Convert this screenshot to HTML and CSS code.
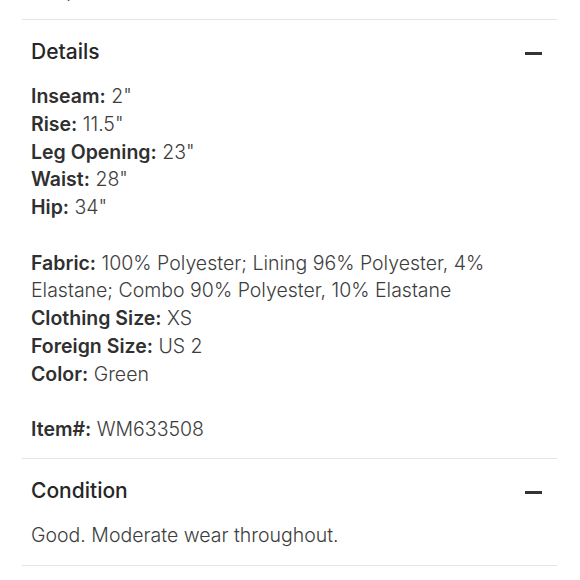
FILE: index.html
```html
<!DOCTYPE html>
<html>
<head>
<meta charset="utf-8">
<link rel="stylesheet" href="styles.css">
</head>
<body>
<div class="page">
  <section class="section section-top">
    <p class="text">Shop</p>
  </section>
  <section class="section">
    <div class="head">
      <h2 class="title">Details</h2>
      <span class="minus"></span>
    </div>
    <div class="body">
      <p class="text"><b>Inseam:</b> 2"</p>
      <p class="text"><b>Rise:</b> 11.5"</p>
      <p class="text"><b>Leg Opening:</b> 23"</p>
      <p class="text"><b>Waist:</b> 28"</p>
      <p class="text"><b>Hip:</b> 34"</p>
      <p class="text gap"><b>Fabric:</b> 100% Polyester; Lining 96% Polyester, 4% Elastane; Combo 90% Polyester, 10% Elastane</p>
      <p class="text"><b>Clothing Size:</b> XS</p>
      <p class="text"><b>Foreign Size:</b> US 2</p>
      <p class="text"><b>Color:</b> Green</p>
      <p class="text gap"><b>Item#:</b> WM633508</p>
    </div>
  </section>
  <section class="section">
    <div class="head">
      <h2 class="title">Condition</h2>
      <span class="minus"></span>
    </div>
    <div class="body">
      <p class="text">Good. Moderate wear throughout.</p>
    </div>
  </section>
</div>
</body>
</html>
```

FILE: styles.css
```css
* { box-sizing: border-box; }
html, body { margin: 0; padding: 0; background: #fff; }
body {
  font-family: Inter, "Liberation Sans", sans-serif;
  color: #444;
  overflow: hidden;
}
.page {
  width: 580px;
  padding: 0 23px 0 22px;
}
.section {
  border-bottom: 1px solid #e4e4e4;
  padding: 17.5px 0 14.5px 9px;
}
.section-top {
  margin-top: -23px;
  padding-top: 0;
  padding-bottom: 14.25px;
}
.head {
  display: flex;
  align-items: center;
  justify-content: space-between;
  height: 28px;
  margin-bottom: 17.5px;
  padding-right: 15px;
}
.title {
  margin: 0;
  font-size: 21px;
  line-height: 28px;
  font-weight: 500;
  color: #262626;
}
.minus {
  width: 17px;
  height: 3px;
  background: #333;
  margin-top: 3px;
}
.text {
  margin: 0;
  font-size: 19.5px;
  line-height: 27.75px;
  font-weight: 300;
  color: #3d3d3d;
  padding-right: 4px;
}
.text b {
  font-weight: 600;
  color: #303030;
}
.gap { margin-top: 27.75px; }
```
